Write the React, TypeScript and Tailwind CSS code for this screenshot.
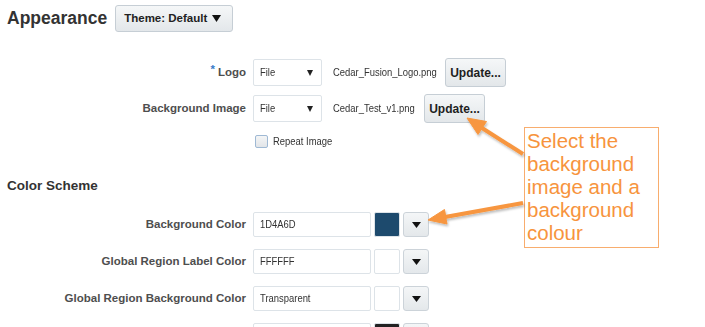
import React from "react";

const Tri = ({ w = 8, h = 6, color = "#111" }: { w?: number; h?: number; color?: string }) => (
  <svg width={w} height={h} viewBox={`0 0 ${w} ${h}`} className="block shrink-0">
    <polygon points={`0,0 ${w},0 ${w / 2},${h}`} fill={color} />
  </svg>
);

const Narrow = ({ children, className = "" }: { children: React.ReactNode; className?: string }) => (
  <span className={`inline-block whitespace-nowrap text-[11.5px] text-[#333] ${className}`}>
    <span className="inline-block origin-left scale-x-[0.82]">{children}</span>
  </span>
);

const Label = ({ children }: { children?: React.ReactNode }) => (
  <div className="text-right text-[11.5px] font-bold text-[#4e4e4e] leading-none whitespace-nowrap">{children}</div>
);

const SelectBox = () => (
  <div className="h-[27px] w-[69px] border border-[#dde3e8] bg-white rounded-[2px] flex items-center justify-between pl-[6px] pr-[8px]">
    <Narrow>File</Narrow>
    <Tri w={6} h={6} color="#222" />
  </div>
);

const UpdateBtn = () => (
  <div className="h-[29px] w-[61px] border border-[#c6ced5] rounded-[3px] bg-gradient-to-b from-[#f5f7f8] to-[#e3e7ea] flex items-center justify-center text-[12px] font-bold text-[#1e1e1e]">
    Update...
  </div>
);

const ColorRow = ({ label, value, swatch }: { label: string; value: string; swatch: string }) => (
  <>
    <Label>{label}</Label>
    <div className="flex items-center gap-[3px] h-[25px]">
      <div className="h-[25px] w-[118px] border border-[#dde3e8] bg-white rounded-[2px] flex items-center pl-[6px]">
        <Narrow>{value}</Narrow>
      </div>
      <div className="h-[25px] w-[26px] border border-[#dde3e8] rounded-[2px]" style={{ background: swatch }} />
      <div className="h-[25px] w-[26px] border border-[#ccd3d9] rounded-[3px] bg-gradient-to-b from-[#f4f6f7] to-[#e4e8eb] flex items-center justify-center">
        <Tri w={9} h={6} color="#111" />
      </div>
    </div>
  </>
);

export default function App() {
  return (
    <div className="relative w-[705px] h-[327px] overflow-hidden bg-white font-['Liberation_Sans',Arial,sans-serif]">
      <div className="pl-[7px] pt-[5px]">
        <div className="flex items-center gap-[8px] h-[27px]">
          <h1 className="text-[17.5px] font-bold text-[#333] leading-none">Appearance</h1>
          <div className="h-[27px] w-[118px] border border-[#c6ced5] rounded-[3px] bg-gradient-to-b from-[#f5f7f8] to-[#e3e7ea] flex items-center justify-between pl-[8px] pr-[11px]">
            <span className="text-[11.5px] font-bold text-[#222] whitespace-nowrap">Theme: Default</span>
            <Tri w={9} h={7} color="#111" />
          </div>
        </div>

        <div className="mt-[26px] grid grid-cols-[239px_auto] gap-x-[7px] items-center">
          <Label>
            <span className="text-[#3a7bc8] relative -top-[3px] mr-[3px]">*</span>
            Logo
          </Label>
          <div className="flex items-center h-[29px]">
            <SelectBox />
            <Narrow className="ml-[11px] w-[104px]">Cedar_Fusion_Logo.png</Narrow>
            <div className="ml-[8px]">
              <UpdateBtn />
            </div>
          </div>
        </div>

        <div className="mt-[7px] grid grid-cols-[239px_auto] gap-x-[7px] items-center">
          <Label>Background Image</Label>
          <div className="flex items-center h-[29px]">
            <SelectBox />
            <Narrow className="ml-[11px] w-[83px]">Cedar_Test_v1.png</Narrow>
            <div className="ml-[8px]">
              <UpdateBtn />
            </div>
          </div>
        </div>

        <div className="mt-[12px] grid grid-cols-[239px_auto] gap-x-[7px] items-center">
          <div />
          <div className="flex items-center h-[13px] pl-[2px]">
            <div className="w-[13px] h-[13px] border border-[#9fb9d4] rounded-[2px] bg-gradient-to-b from-[#f4f5f6] to-[#e2e5e8]" />
            <Narrow className="ml-[5px] w-[62px]">Repeat Image</Narrow>
          </div>
        </div>

        <h2 className="mt-[30px] h-[16px] leading-[16px] text-[13.5px] font-bold text-[#333]">Color Scheme</h2>

        <div className="mt-[18px] grid grid-cols-[239px_auto] gap-x-[7px] gap-y-[12px] items-center">
          <ColorRow label="Background Color" value="1D4A6D" swatch="#1d4a6d" />
          <ColorRow label="Global Region Label Color" value="FFFFFF" swatch="#ffffff" />
          <ColorRow label="Global Region Background Color" value="Transparent" swatch="#ffffff" />
          <ColorRow label="" value="" swatch="#222222" />
        </div>
      </div>

      {/* callout */}
      <div className="absolute left-[524px] top-[127px] w-[135px] h-[121px] border border-[#f8ad6e] bg-white pl-[2px] pt-[1px] text-[20.5px] leading-[23px] text-[#f7943d]">
        Select the
        <br />
        background
        <br />
        image and a
        <br />
        background
        <br />
        colour
      </div>

      <svg className="absolute inset-0 pointer-events-none" width={705} height={327}>
        <defs>
          <filter id="sh" x="-20%" y="-20%" width="140%" height="140%">
            <feDropShadow dx="1" dy="2" stdDeviation="1.2" floodColor="#000" floodOpacity="0.25" />
          </filter>
        </defs>
        <g filter="url(#sh)" fill="#f7963f" stroke="#f7963f">
          <line x1={523} y1={154} x2={482} y2={128} strokeWidth={4} />
          <polygon points="467,118 486.5,121.5 478,134.5" strokeWidth={1} strokeLinejoin="round" />
          <line x1={523} y1={203} x2={445} y2={217} strokeWidth={4} />
          <polygon points="428,220 444.5,209.5 447,224" strokeWidth={1} strokeLinejoin="round" />
        </g>
      </svg>
    </div>
  );
}
